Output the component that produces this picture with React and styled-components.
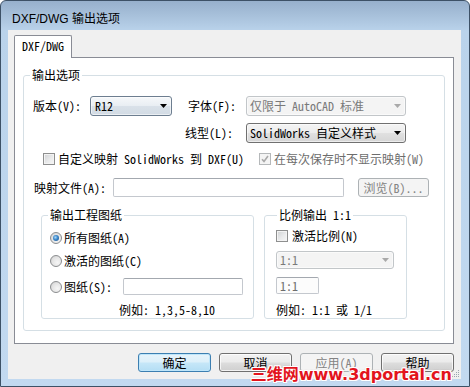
import React from 'react';
import styled, { createGlobalStyle, css } from 'styled-components';

const UI = `"Noto Sans Mono CJK SC", "Liberation Mono", "Noto Sans CJK SC", monospace`;
const TITLE = `"Liberation Sans", "Noto Sans CJK SC", sans-serif`;

const Global = createGlobalStyle`
  html, body { margin: 0; padding: 0; background: #fff; }
  body { width: 470px; height: 387px; overflow: hidden; }
  *, *::before, *::after { box-sizing: border-box; }
`;

const Window = styled.div`
  position: relative;
  width: 470px;
  height: 387px;
  border: 1px solid #3d5166;
  border-radius: 6px 6px 0 0;
  background: linear-gradient(180deg, #97b0cc 0px, #a8c1db 15px, #bad3eb 30px, #c2d9f0 100%);
  display: flex;
  flex-direction: column;
  padding: 0 8px 7px 7px;
  overflow: hidden;
`;

const TitleBar = styled.div`
  height: 29px;
  flex: none;
  display: flex;
  align-items: center;
  padding: 7px 0 0 4px;
  font: 12px/14px ${TITLE};
  color: #000;
`;

const Client = styled.div`
  position: relative;
  flex: 1;
  background: #f0f0f0;
  display: flex;
  flex-direction: column;
  padding: 5px 7px 0 6px;
`;

const TabStrip = styled.div`
  height: 22px;
  display: flex;
  flex: none;
`;

const Tab = styled.div`
  position: relative;
  z-index: 1;
  width: 58px;
  height: 23px;
  background: #fff;
  border: 1px solid #898c95;
  border-bottom: none;
  border-radius: 2px 2px 0 0;
  display: flex;
  align-items: center;
  justify-content: center;
  padding-bottom: 2px;
  font: 12px/14px ${UI};
  color: #000;
`;

const Panel = styled.div`
  width: 440px;
  height: 287px;
  flex: none;
  background: #fff;
  border: 1px solid #898c95;
  padding: 10px 8px 12px 8px;
`;

const Group = styled.fieldset`
  margin: 0;
  padding: 0;
  min-width: 0;
  width: ${p => (p.$w ? `${p.$w}px` : 'auto')};
  border: 1px solid #d5dfe5;
  border-radius: 3px;
`;

const Legend = styled.legend`
  margin-left: ${p => p.$ml}px;
  padding: 0 2px;
  font: 12px/14px ${UI};
  color: #000;
`;

const GroupBody = styled.div`
  display: flex;
  flex-direction: column;
  padding: ${p => p.$pt}px 0 ${p => p.$pb}px ${p => p.$pl || 0}px;
`;

const Row = styled.div`
  display: flex;
  align-items: center;
  flex: none;
  height: ${p => p.$h || 20}px;
  margin-top: ${p => p.$mt || 0}px;
  padding-left: ${p => p.$pl || 0}px;
`;

const SubRow = styled.div`
  display: flex;
  align-items: stretch;
  gap: 10px;
  margin-top: ${p => p.$mt}px;
  padding-left: ${p => p.$pl}px;
`;

const Label = styled.span`
  flex: none;
  width: ${p => (p.$w ? `${p.$w}px` : 'auto')};
  margin-left: ${p => p.$ml || 0}px;
  font: 12px/14px ${UI};
  color: ${p => (p.$disabled ? '#6d6d6d' : '#000')};
  text-align: ${p => (p.$right ? 'right' : 'left')};
  white-space: nowrap;
`;

const comboTones = {
  focus: css`
    border-color: #6d7e90;
    background: linear-gradient(180deg, #f6f8fa 0%, #e9eef3 48%, #d9e1e9 52%, #d2dbe4 100%);
    color: #000;
  `,
  normal: css`
    border-color: #707070;
    background: linear-gradient(180deg, #f4f4f4 0%, #ececec 48%, #e0e0e0 52%, #d6d6d6 100%);
    color: #000;
  `,
  disabled: css`
    border-color: #c2c6c9;
    background: #f4f4f4;
    color: #7a7a7a;
  `,
};

const Combo = styled.div`
  flex: none;
  width: ${p => p.$w}px;
  height: ${p => p.$h || 20}px;
  margin-left: ${p => p.$ml || 0}px;
  border: 1px solid;
  border-radius: 3px;
  display: flex;
  align-items: center;
  justify-content: space-between;
  padding: 0 4px 0 ${p => p.$pl ?? 3}px;
  font: 12px/14px ${UI};
  box-shadow: inset 0 0 0 1px rgba(255, 255, 255, 0.55);
  ${p => comboTones[p.$tone || 'normal']}
`;

const ArrowSvg = styled.svg`
  flex: none;
  display: block;
`;

const Arrow = ({ color = '#000' }) => (
  <ArrowSvg width="7" height="4" viewBox="0 0 7 4">
    <path d="M0 0 H7 L3.5 4 Z" fill={color} />
  </ArrowSvg>
);

const TextBox = styled.div`
  flex: none;
  width: ${p => p.$w}px;
  height: ${p => p.$h || 19}px;
  margin-left: ${p => p.$ml || 0}px;
  background: ${p => (p.$disabled ? '#fcfcfc' : '#fff')};
  border: 1px solid #c4c8ce;
  border-top-color: #a3a8af;
  border-radius: 2px;
  display: flex;
  align-items: center;
  padding-left: 3px;
  font: 12px/14px ${UI};
  color: #6d6d6d;
`;

const Button = styled.div`
  flex: none;
  width: ${p => p.$w || 73}px;
  height: ${p => p.$h || 19}px;
  margin-left: ${p => p.$ml || 0}px;
  border: 1px solid #707070;
  border-radius: 3px;
  display: flex;
  align-items: center;
  justify-content: center;
  font: 12px/14px ${UI};
  color: #000;
  background: linear-gradient(180deg, #f2f2f2 0%, #ebebeb 48%, #dddddd 52%, #cfcfcf 100%);
  box-shadow: inset 0 0 0 1px rgba(255, 255, 255, 0.75);
  ${p =>
    p.$default &&
    css`
      border-color: #3c7fb1;
      background: linear-gradient(180deg, #e7f4fb 0%, #dcf0fa 48%, #c6e7f8 52%, #b4def4 100%);
      box-shadow: inset 0 0 0 1px #bfe6fa;
    `}
  ${p =>
    p.$disabled &&
    css`
      border-color: #adb2b5;
      background: #f4f4f4;
      color: #838383;
      box-shadow: none;
    `}
`;

const ButtonRow = styled.div`
  display: flex;
  justify-content: flex-end;
  gap: 8px;
  margin-top: 9px;
`;

const ItemRow = styled.div`
  display: flex;
  align-items: center;
  gap: ${p => p.$gap ?? 3}px;
  flex: none;
  width: ${p => (p.$w ? `${p.$w}px` : 'auto')};
`;

const CheckBox = styled.span`
  flex: none;
  width: 12px;
  height: 12px;
  border: 1px solid ${p => (p.$disabled ? '#b5b8ba' : '#8e8f8f')};
  background: ${p =>
    p.$disabled ? '#f4f4f4' : 'linear-gradient(135deg, #cfd1d3 0%, #e9eaeb 55%, #f7f7f7 100%)'};
  box-shadow: inset 0 0 0 1px ${p => (p.$disabled ? '#f4f4f4' : '#f3f3f3')};
  display: flex;
  align-items: center;
  justify-content: center;
`;

const Check = ({ checked, disabled }) => (
  <CheckBox $disabled={disabled}>
    {checked && (
      <svg width="8" height="8" viewBox="0 0 8 8">
        <path d="M1 4.2 L3 6.4 L7 1" stroke={disabled ? '#a9a9a9' : '#222'} strokeWidth="1.6" fill="none" />
      </svg>
    )}
  </CheckBox>
);

const RadioDot = styled.span`
  flex: none;
  width: 12px;
  height: 12px;
  border-radius: 50%;
  border: 1px solid #8b8d8f;
  background: radial-gradient(circle at 65% 65%, #f6f6f6 0%, #e4e4e4 55%, #c9c9c9 100%);
  display: flex;
  align-items: center;
  justify-content: center;
  &::after {
    content: '';
    display: ${p => (p.$on ? 'block' : 'none')};
    width: 6px;
    height: 6px;
    border-radius: 50%;
    background: radial-gradient(circle at 40% 40%, #a8d8f8 0%, #3b86c9 45%, #1a4d86 100%);
  }
`;

const Grip = styled.svg`
  position: absolute;
  right: 1px;
  bottom: 1px;
`;

const Watermark = styled.div`
  position: absolute;
  right: 17px;
  bottom: 1px;
  font: bold 16px/20px "DejaVu Sans", "Noto Sans CJK SC", sans-serif;
  color: #e3141d;
  white-space: nowrap;
  text-shadow:
    1px 0 0 #fff, -1px 0 0 #fff, 0 1px 0 #fff, 0 -1px 0 #fff,
    1px 1px 0 #fff, -1px -1px 0 #fff, 1px -1px 0 #fff, -1px 1px 0 #fff,
    0 0 2px rgba(80, 0, 0, 0.6);
`;

export default function App() {
  return (
    <>
      <Global />
      <Window>
        <TitleBar>DXF/DWG 输出选项</TitleBar>
        <Client>
          <TabStrip>
            <Tab>DXF/DWG</Tab>
          </TabStrip>
          <Panel>
            <Group>
              <Legend $ml={6}>输出选项</Legend>
              <GroupBody $pt={14} $pb={11}>
                <Row $pl={9}>
                  <Label $w={57}>版本(V):</Label>
                  <Combo $w={82} $tone="focus" $pl={4}>
                    R12
                    <Arrow />
                  </Combo>
                  <Label $w={58} $ml={16}>字体(F):</Label>
                  <Combo $w={160} $tone="disabled">
                    仅限于 AutoCAD 标准
                    <Arrow color="#a9a9a9" />
                  </Combo>
                </Row>
                <Row $mt={7} $pl={161}>
                  <Label $w={61}>线型(L):</Label>
                  <Combo $w={160}>
                    SolidWorks 自定义样式
                    <Arrow />
                  </Combo>
                </Row>
                <Row $mt={7} $h={18} $pl={19}>
                  <ItemRow $w={216}>
                    <Check />
                    <Label>自定义映射 SolidWorks 到 DXF(U)</Label>
                  </ItemRow>
                  <ItemRow>
                    <Check checked disabled />
                    <Label $disabled>在每次保存时不显示映射(W)</Label>
                  </ItemRow>
                </Row>
                <Row $mt={10} $h={19} $pl={10}>
                  <Label $w={79}>映射文件(A):</Label>
                  <TextBox $w={231} $h={19} />
                  <Button $w={71} $h={19} $ml={14} $disabled>
                    浏览(B)...
                  </Button>
                </Row>
                <SubRow $mt={11} $pl={17}>
                  <Group $w={213}>
                    <Legend $ml={6}>输出工程图纸</Legend>
                    <GroupBody $pt={8} $pb={1} $pl={8}>
                      <Row $h={16}>
                        <ItemRow $gap={2}>
                          <RadioDot $on />
                          <Label>所有图纸(A)</Label>
                        </ItemRow>
                      </Row>
                      <Row $h={16} $mt={7}>
                        <ItemRow $gap={2}>
                          <RadioDot />
                          <Label>激活的图纸(C)</Label>
                        </ItemRow>
                      </Row>
                      <Row $h={17} $mt={9}>
                        <ItemRow $gap={2}>
                          <RadioDot />
                          <Label $w={59}>图纸(S):</Label>
                        </ItemRow>
                        <TextBox $w={120} $h={17} />
                      </Row>
                      <Row $h={14} $mt={8} $pl={69}>
                        <Label>例如: 1,3,5-8,10</Label>
                      </Row>
                    </GroupBody>
                  </Group>
                  <Group $w={143}>
                    <Legend $ml={12}>比例输出 1:1</Legend>
                    <GroupBody $pt={6} $pb={1} $pl={11}>
                      <Row $h={16}>
                        <ItemRow $gap={4}>
                          <Check />
                          <Label>激活比例(N)</Label>
                        </ItemRow>
                      </Row>
                      <Row $h={18} $mt={7}>
                        <Combo $w={118} $h={18} $tone="disabled">
                          1:1
                          <Arrow color="#a9a9a9" />
                        </Combo>
                      </Row>
                      <Row $h={17} $mt={8}>
                        <TextBox $w={43} $h={17} $disabled>
                          1:1
                        </TextBox>
                      </Row>
                      <Row $h={14} $mt={9}>
                        <Label>例如: 1:1 或 1/1</Label>
                      </Row>
                    </GroupBody>
                  </Group>
                </SubRow>
              </GroupBody>
            </Group>
          </Panel>
          <ButtonRow>
            <Button $default>确定</Button>
            <Button>取消</Button>
            <Button $disabled>应用(A)</Button>
            <Button>帮助</Button>
          </ButtonRow>
          <Grip width="10" height="10" viewBox="0 0 10 10">
            <g fill="#9aa5b1">
              <rect x="8" y="2" width="1" height="1" />
              <rect x="6" y="4" width="1" height="1" />
              <rect x="8" y="4" width="1" height="1" />
              <rect x="4" y="6" width="1" height="1" />
              <rect x="6" y="6" width="1" height="1" />
              <rect x="8" y="6" width="1" height="1" />
              <rect x="2" y="8" width="1" height="1" />
              <rect x="4" y="8" width="1" height="1" />
              <rect x="6" y="8" width="1" height="1" />
              <rect x="8" y="8" width="1" height="1" />
            </g>
          </Grip>
        </Client>
        <Watermark>三维网www.3dportal.cn</Watermark>
      </Window>
    </>
  );
}
